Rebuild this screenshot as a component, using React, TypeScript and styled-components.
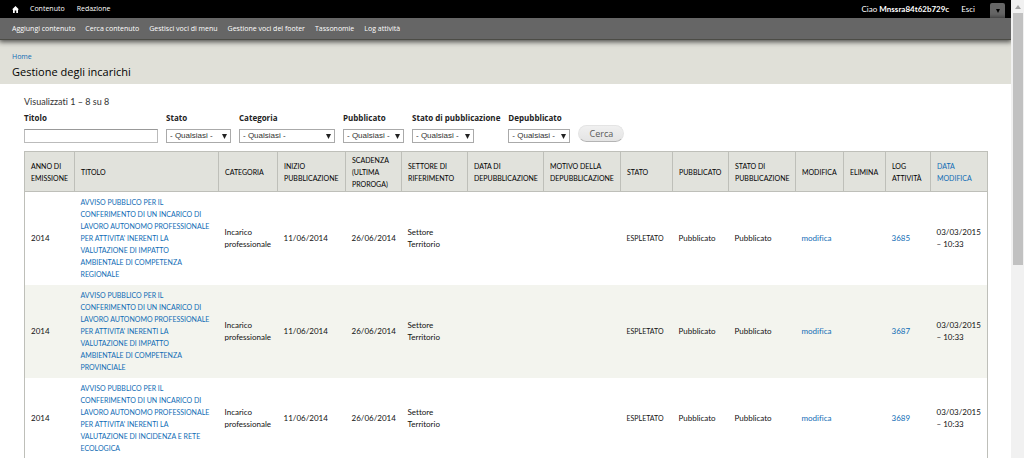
import React from "react";
import styled, { createGlobalStyle } from "styled-components";

const GlobalStyle = createGlobalStyle`
  * { box-sizing: border-box; }
  html, body { margin: 0; background: #fff; }
  body, input, select, button { font-family: Lato, "Liberation Sans", sans-serif; }
  body { color: #111; font-size: 8px; line-height: 12px; font-variant-ligatures: none; }
  a { color: #0f6cb5; text-decoration: none; }
`;

const humanist = `"Open Sans", "Noto Sans", sans-serif`;

const Shell = styled.div`
  display: grid;
  grid-template-columns: minmax(0, 1fr) 13px;
  height: 100vh;
  overflow: hidden;
`;

const Page = styled.div`
  overflow: hidden;
`;

const TopBar = styled.nav`
  display: flex;
  align-items: center;
  height: 18px;
  padding: 0 6px 0 12px;
  background: #000;
`;

const HomeLink = styled.a`
  display: flex;
  margin-right: 11px;
`;

const BarLinks = styled.div<{ $gap: number }>`
  display: flex;
  flex: 1;
  gap: ${(p) => p.$gap}px;
`;

const BarLink = styled.a`
  color: #fff;
  font-family: ${humanist};
  font-size: 7px;
  white-space: nowrap;
`;

const AccountLink = styled.a`
  color: #fff;
  white-space: nowrap;
`;

const Account = styled.div`
  display: flex;
  gap: 12px;
  margin-right: 15px;
`;

const Toggle = styled.button`
  display: flex;
  align-items: center;
  justify-content: center;
  align-self: flex-end;
  width: 15px;
  height: 15px;
  padding: 0;
  border: 0;
  border-radius: 2px 2px 0 0;
  background: #666;
`;

const Drawer = styled.nav`
  position: relative;
  display: flex;
  align-items: center;
  height: 22px;
  padding: 0 12px;
  background: #666;
  border-bottom: 1px solid #4c4c46;
  box-shadow: 0 1px 5px 1px rgba(0, 0, 0, 0.65);
`;

const Branding = styled.header`
  height: 44px;
  padding: 11px 12px 0;
  background: #e0e0d8;
  font-family: ${humanist};
`;

const Crumb = styled.a`
  display: block;
  width: max-content;
  font-size: 7px;
`;

const Title = styled.h1`
  margin: 1px 0 0;
  color: #000;
  font-size: 11px;
  font-weight: 400;
  line-height: 16px;
`;

const Main = styled.main`
  padding: 12px 25px 0 24px;
`;

const Summary = styled.div`
  margin-bottom: 4px;
  color: #333;
  font-size: 9px;
`;

const Filters = styled.form`
  display: flex;
  align-items: flex-end;
  gap: 8px;
  margin-bottom: 8px;
`;

const Field = styled.div`
  display: flex;
  flex-direction: column;
  gap: 5px;
`;

const Label = styled.label`
  color: #222;
  font-family: ${humanist};
  font-weight: 700;
  white-space: nowrap;
`;

const TextInput = styled.input`
  width: 134px;
  height: 14px;
  padding: 0 2px;
  border: 1px solid #bbb;
  border-top-color: #999;
  font-size: 8px;
`;

const SelectWrap = styled.div<{ $width: number }>`
  display: grid;
  align-items: center;
  width: ${(p) => p.$width}px;

  & > * { grid-area: 1 / 1; }
  & > svg { justify-self: end; margin-right: 4px; pointer-events: none; }
`;

const Select = styled.select`
  appearance: none;
  width: 100%;
  height: 14px;
  padding: 0 3px;
  border: 1px solid #aaa;
  border-radius: 0;
  background: #fff;
  color: #333;
  font-family: "Liberation Sans", sans-serif;
  font-size: 8px;
  line-height: 12px;
`;

const Submit = styled.button`
  width: 46px;
  height: 17px;
  margin-bottom: 1px;
  padding: 0;
  border: 1px solid #e4e4e4;
  border-bottom-color: #b4b4b4;
  border-radius: 9px;
  background: linear-gradient(#f0f0f0, #e4e4e4);
  color: #5a5a5a;
  font-family: ${humanist};
  font-size: 9px;
  line-height: 14px;
`;

const Table = styled.table`
  width: 100%;
  table-layout: fixed;
  border-collapse: collapse;
  border: 1px solid #bebfb9;
`;

const HeadCell = styled.th`
  height: 40px;
  padding: 1px 0 1px 6px;
  border: 1px solid #bebfb9;
  background: #e1e2dc;
  color: #000;
  font-size: 7px;
  font-weight: 400;
  text-align: left;
  text-transform: uppercase;
`;

const Row = styled.tr`
  &:nth-child(even) { background: #f3f4ee; }
`;

const Cell = styled.td`
  padding: 4px 5px 5px 6px;
  color: #111;
`;

const CapsCell = styled(Cell)`
  padding-right: 7px;
  font-size: 7px;
`;

const HomeIcon = () => (
  <svg width="7" height="7" viewBox="0 0 14 14" aria-hidden="true">
    <path d="M7 0 L14 7 H12 V14 H8.5 V9 H5.5 V14 H2 V7 H0 Z" fill="#fff" />
  </svg>
);

const Arrow = ({ color = "#222", size = 5 }: { color?: string; size?: number }) => (
  <svg width={size} height={size} viewBox="0 0 10 10" aria-hidden="true">
    <path d="M0 0 H10 L5 10 Z" fill={color} />
  </svg>
);

const ScrollTrack = styled.div`
  display: flex;
  flex-direction: column;
  align-items: center;
  padding-left: 1px;
  background: #f1f1f1;
`;

const ScrollUp = styled.div`
  display: flex;
  align-items: center;
  justify-content: center;
  height: 13px;
`;

const Thumb = styled.div`
  width: 10px;
  height: 55%;
  background: #c1c1c1;
`;

const sections = ["Contenuto", "Redazione"];
const shortcuts = [
  "Aggiungi contenuto",
  "Cerca contenuto",
  "Gestisci voci di menu",
  "Gestione voci del footer",
  "Tassonomie",
  "Log attività",
];

const filters = [
  { id: "stato", label: "Stato", width: 65 },
  { id: "categoria", label: "Categoria", width: 96 },
  { id: "pubblicato", label: "Pubblicato", width: 61 },
  { id: "stato-pubblicazione", label: "Stato di pubblicazione", width: 62 },
  { id: "depubblicato", label: "Depubblicato", width: 62 },
];

const columns = [
  { label: "Anno di emissione", width: 50 },
  { label: "Titolo", width: 144 },
  { label: "Categoria", width: 59 },
  { label: "Inizio pubblicazione", width: 68 },
  { label: "Scadenza (ultima proroga)", width: 56 },
  { label: "Settore di riferimento", width: 66 },
  { label: "Data di depubblicazione", width: 76 },
  { label: "Motivo della depubblicazione", width: 77 },
  { label: "Stato", width: 52 },
  { label: "Pubblicato", width: 56 },
  { label: "Stato di pubblicazione", width: 67 },
  { label: "Modifica", width: 48 },
  { label: "Elimina", width: 42 },
  { label: "Log attività", width: 45 },
  { label: "Data modifica", width: 57, sortable: true },
];

const subject =
  "AVVISO PUBBLICO PER IL CONFERIMENTO DI UN INCARICO DI LAVORO AUTONOMO PROFESSIONALE PER ATTIVITA' INERENTI LA VALUTAZIONE DI ";

const rows = [
  { log: "3685", title: subject + "IMPATTO AMBIENTALE DI COMPETENZA REGIONALE" },
  { log: "3687", title: subject + "IMPATTO AMBIENTALE DI COMPETENZA PROVINCIALE" },
  { log: "3689", title: subject + "INCIDENZA E RETE ECOLOGICA" },
];

export default function App() {
  return (
    <>
      <GlobalStyle />
      <Shell>
        <Page>
          <TopBar>
            <HomeLink href="#" aria-label="Home">
              <HomeIcon />
            </HomeLink>
            <BarLinks $gap={12}>
              {sections.map((s) => (
                <BarLink href="#" key={s}>{s}</BarLink>
              ))}
            </BarLinks>
            <Account>
              <AccountLink href="#">Ciao <strong>Mnssra84t62b729c</strong></AccountLink>
              <AccountLink href="#">Esci</AccountLink>
            </Account>
            <Toggle type="button" aria-label="Scorciatoie">
              <Arrow color="#000" size={4} />
            </Toggle>
          </TopBar>
          <Drawer>
            <BarLinks $gap={10}>
              {shortcuts.map((s) => (
                <BarLink href="#" key={s}>{s}</BarLink>
              ))}
            </BarLinks>
          </Drawer>
          <Branding>
            <Crumb href="#">Home</Crumb>
            <Title>Gestione degli incarichi</Title>
          </Branding>
          <Main>
            <Summary>Visualizzati 1 – 8 su 8</Summary>
            <Filters>
              <Field>
                <Label htmlFor="titolo">Titolo</Label>
                <TextInput id="titolo" type="text" />
              </Field>
              {filters.map((f) => (
                <Field key={f.id}>
                  <Label htmlFor={f.id}>{f.label}</Label>
                  <SelectWrap $width={f.width}>
                    <Select id={f.id}>
                      <option>- Qualsiasi -</option>
                    </Select>
                    <Arrow />
                  </SelectWrap>
                </Field>
              ))}
              <Submit type="button">Cerca</Submit>
            </Filters>
            <Table>
              <colgroup>
                {columns.map((c) => (
                  <col key={c.label} style={{ width: c.width }} />
                ))}
              </colgroup>
              <thead>
                <tr>
                  {columns.map((c) => (
                    <HeadCell key={c.label} scope="col">
                      {c.sortable ? <a href="#">{c.label}</a> : c.label}
                    </HeadCell>
                  ))}
                </tr>
              </thead>
              <tbody>
                {rows.map((r) => (
                  <Row key={r.log}>
                    <Cell>2014</Cell>
                    <CapsCell><a href="#">{r.title}</a></CapsCell>
                    <Cell>Incarico professionale</Cell>
                    <Cell>11/06/2014</Cell>
                    <Cell>26/06/2014</Cell>
                    <Cell>Settore Territorio</Cell>
                    <Cell />
                    <Cell />
                    <CapsCell>ESPLETATO</CapsCell>
                    <Cell>Pubblicato</Cell>
                    <Cell>Pubblicato</Cell>
                    <Cell><a href="#">modifica</a></Cell>
                    <Cell />
                    <Cell><a href="#">{r.log}</a></Cell>
                    <Cell>03/03/2015 – 10:33</Cell>
                  </Row>
                ))}
              </tbody>
            </Table>
          </Main>
        </Page>
        <ScrollTrack aria-hidden="true">
          <ScrollUp>
            <svg width="6" height="4" viewBox="0 0 6 4">
              <path d="M0 4 L3 0 L6 4 Z" fill="#a3a3a3" />
            </svg>
          </ScrollUp>
          <Thumb />
        </ScrollTrack>
      </Shell>
    </>
  );
}
